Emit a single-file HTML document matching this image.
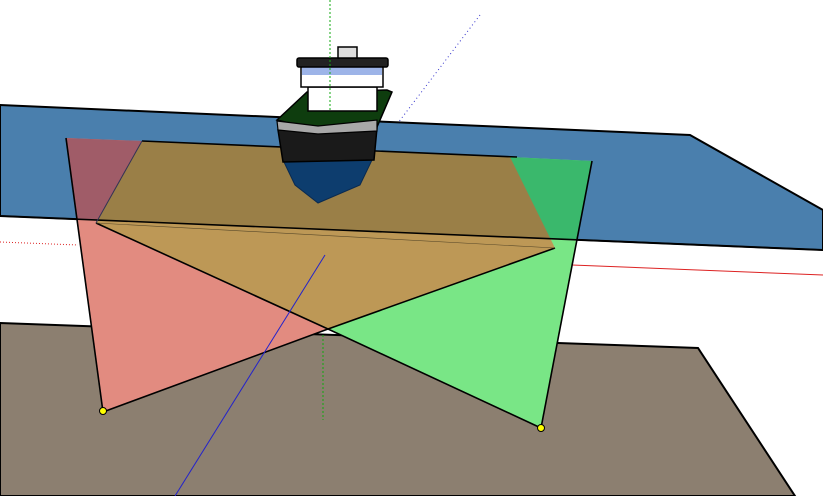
<!DOCTYPE html>
<html><head><style>html,body{margin:0;padding:0;background:#fff;overflow:hidden}svg{display:block}</style></head>
<body>
<svg width="823" height="496" viewBox="0 0 823 496" xmlns="http://www.w3.org/2000/svg">
<defs>
<clipPath id="water">
<polygon points="0,105 690,135 823,210 823,250 0,216"/>
</clipPath>
</defs>
<rect width="823" height="496" fill="#fff"/>
<polygon points="0,323 698,348 795,496 0,496" fill="#8c7f70" stroke="#000" stroke-width="2"/>
<line x1="330" y1="0" x2="330" y2="100" stroke="#1a1" stroke-width="1" stroke-dasharray="2,2"/>
<line x1="480" y1="15" x2="385" y2="140" stroke="#33c" stroke-width="1" stroke-dasharray="1,3"/>
<line x1="0" y1="242" x2="78" y2="245" stroke="#d22" stroke-width="1" stroke-dasharray="1,2"/>
<line x1="572" y1="265" x2="823" y2="275" stroke="#d22" stroke-width="1"/>
<polygon points="0,105 690,135 823,210 823,250 0,216" fill="#4a7fad" stroke="#000" stroke-width="2"/>
<polygon points="66,138 142,141 96,223 328,329 103,412" fill="#e28b80"/>
<polygon points="142,141 517,157 555,248 328,329 96,223" fill="#bd9856"/>
<polygon points="510,157 592,161 541,428 328,329 555,248" fill="#79e686"/>
<g clip-path="url(#water)">
<polygon points="66,138 142,141 96,223 328,329 103,412" fill="#a05c68"/>
<polygon points="142,141 517,157 555,248 328,329 96,223" fill="#9a7f47"/>
<polygon points="510,157 592,161 541,428 328,329 555,248" fill="#3ab86c"/>
</g>
<g stroke="#000" stroke-width="1.6" fill="none">
<line x1="66" y1="138" x2="103" y2="412"/>
<line x1="592" y1="161" x2="541" y2="428"/>
<line x1="142" y1="141" x2="517" y2="157"/>
<polyline points="96,223 328,329 555,248"/>
<polyline points="103,412 328,329 541,428"/>
<line x1="0" y1="216" x2="823" y2="250" stroke-width="1.6"/>
</g>
<line x1="142" y1="141" x2="96" y2="223" stroke="#335" stroke-width="1"/>
<line x1="96" y1="223" x2="555" y2="248" stroke="#5a4a2a" stroke-width="0.6"/>
<line x1="325" y1="255" x2="175" y2="496" stroke="#22c" stroke-width="1"/>
<line x1="323" y1="335" x2="323" y2="420" stroke="#1a1" stroke-width="1" stroke-dasharray="2,2"/>
<circle cx="103" cy="411" r="3.5" fill="#ff0" stroke="#000" stroke-width="1"/>
<circle cx="541" cy="428" r="3.5" fill="#ff0" stroke="#000" stroke-width="1"/>
<g stroke="#000" stroke-width="1.5">
<polygon points="283,160 372,160 360,185 318,203 295,185" fill="#0d3d6e" stroke="#0a2a50" stroke-width="1"/>
<polygon points="278,130 377,128 374,160 283,162" fill="#1a1a1a"/>
<polygon points="277,120 307,92 387,90 392,92 377,127 318,130" fill="#0e3d0e"/>
<polygon points="277,121 318,126 377,120 377,131 318,134 278,130" fill="#a8a8a8" stroke-width="1.2"/>
<rect x="308" y="87" width="69" height="24" fill="#fff"/>
<rect x="301" y="67" width="82" height="20" fill="#fff"/>
<rect x="302" y="67" width="80" height="8" fill="#9db4e8" stroke="none"/>
<rect x="297" y="58" width="91" height="9" rx="2" fill="#222"/>
<rect x="338" y="47" width="19" height="11" fill="#ddd"/>
</g>
<line x1="330" y1="0" x2="330" y2="110" stroke="#1a1" stroke-width="1" stroke-dasharray="2,2"/>
</svg>
</body></html>
